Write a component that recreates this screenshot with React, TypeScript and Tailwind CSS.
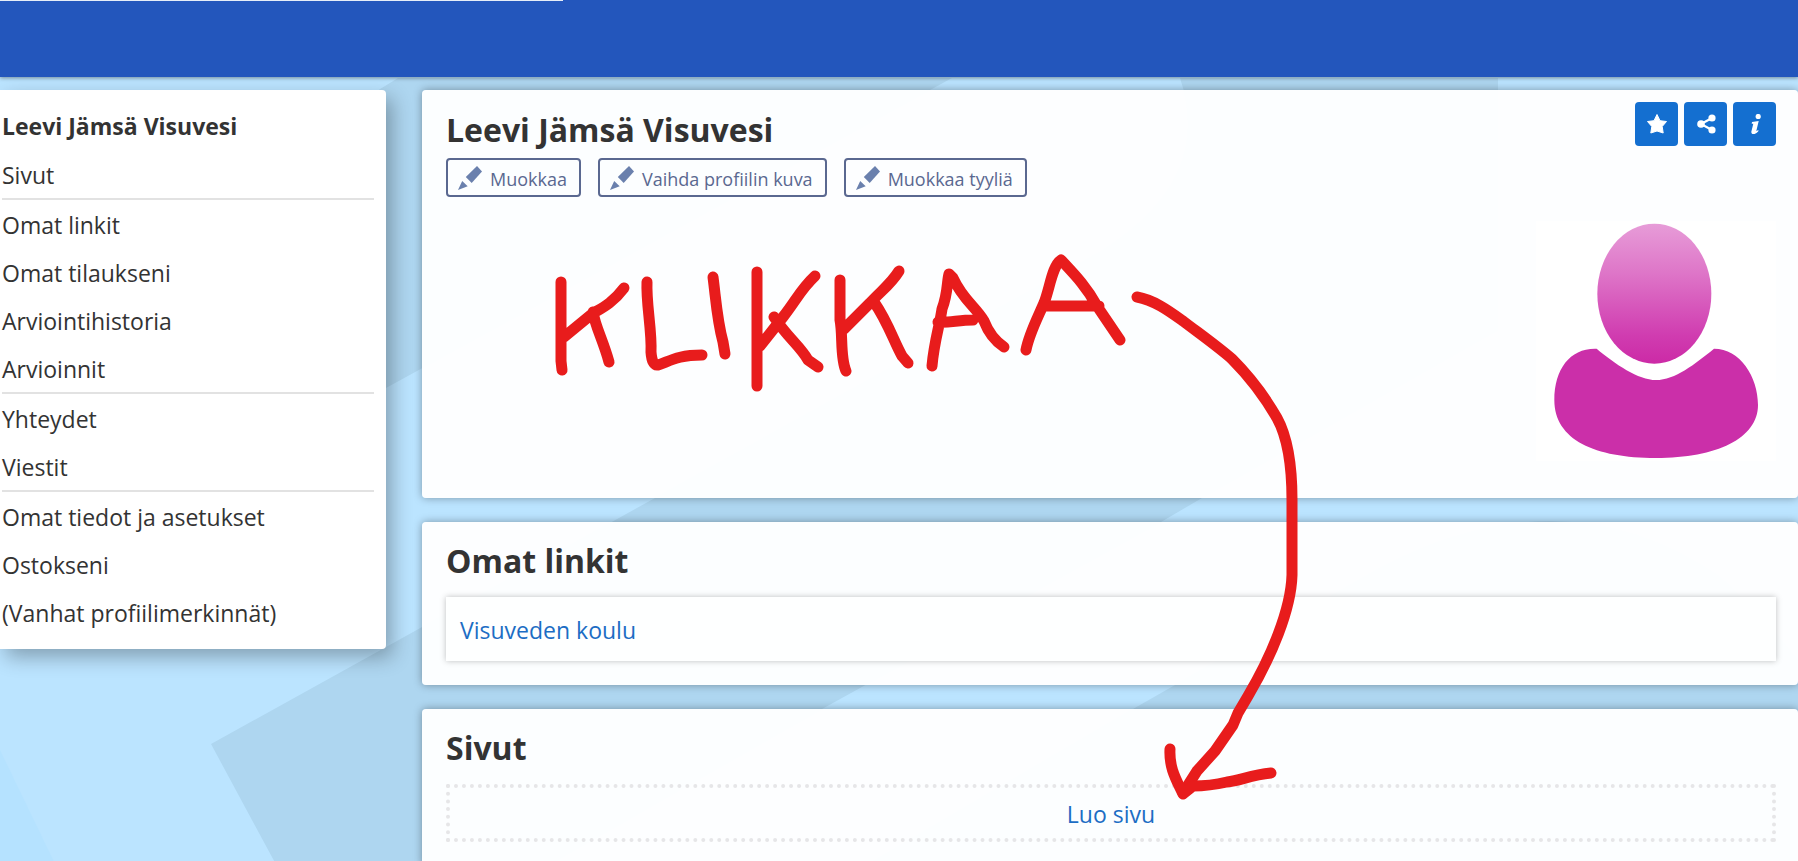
import type { ReactNode } from 'react';

const menuGroups = [
  ['Sivut'],
  ['Omat linkit', 'Omat tilaukseni', 'Arviointihistoria', 'Arvioinnit'],
  ['Yhteydet', 'Viestit'],
  ['Omat tiedot ja asetukset', 'Ostokseni', '(Vanhat profiilimerkinnät)'],
];

const editActions = ['Muokkaa', 'Vaihda profiilin kuva', 'Muokkaa tyyliä'];

function Backdrop() {
  return (
    <svg className="absolute inset-0 -z-10 h-full w-full bg-[#bbe4ff]" aria-hidden="true">
      <path d="M0 750L58 870H0Z" fill="#b5e2ff" />
      <path d="M398 78L200 200L250 463L386 388L952 78Z" fill="#aed6f0" />
      <path d="M211 744L655 498L1100 252Q1215 180 1180 78H1498V330L1202 498L1161 522L822 709L540 870H279Z" fill="#aed6f0" />
      <path d="M858 870L1133 709L1380 568Q1565 470 1720 577Q1798 650 1840 720V870Z" fill="#aed6f0" />
    </svg>
  );
}

function PencilIcon() {
  return (
    <svg className="h-6 w-6" viewBox="0 0 24 24" fill="#6a80ad" aria-hidden="true">
      <path d="M19 0L24 5.600L13.700 17L7.800 11Z" />
      <path d="M4.200 15L9.700 20.300L0 24Z" />
    </svg>
  );
}

function StarIcon() {
  return (
    <svg className="h-5 w-5" viewBox="0 0 20 20" fill="#fff" aria-hidden="true">
      <path
        d="M10 0.500L13 6.700L19.500 7.500L15.200 12.500L16.200 19L10 17L3.800 19L4.800 12.500L0.500 7.500L7 6.700Z"
        stroke="#fff"
        strokeLinejoin="round"
      />
    </svg>
  );
}

function ShareIcon() {
  return (
    <svg className="h-5 w-5" viewBox="0 0 20 20" fill="#fff" aria-hidden="true">
      <path d="M16 4L5 10L16 16" fill="none" stroke="#fff" strokeWidth="2.200" />
      <circle cx="5" cy="10" r="3.800" />
      <circle cx="16" cy="4" r="3.600" />
      <circle cx="16" cy="16" r="3.600" />
    </svg>
  );
}

function InfoIcon() {
  return (
    <svg className="h-5 w-5" viewBox="0 0 20 20" fill="#fff" aria-hidden="true">
      <circle cx="13.200" cy="2.500" r="2.600" />
      <path d="M7 8L13.700 7L11.300 17L13.500 16L13.200 17.500Q11 20.200 8 20.200Q5.800 19.700 6.500 17L8.300 9.700L6.700 9.700Z" />
    </svg>
  );
}

function Avatar() {
  return (
    <svg className="h-60 w-60 bg-white" viewBox="108 483 720 720" role="img" aria-label="Profiilikuva">
      <defs>
        <linearGradient id="head" x1="0" y1="0" x2="0" y2="1">
          <stop offset="0" stopColor="#e79cd8" />
          <stop offset="0.350" stopColor="#de76c8" />
          <stop offset="0.800" stopColor="#d03cb0" />
          <stop offset="1" stopColor="#cc2aa6" />
        </linearGradient>
      </defs>
      <ellipse cx="463" cy="701" rx="171" ry="210" fill="url(#head)" />
      <path
        d="M290 866C345 912 415 960 468 960C525 960 585 912 642 866C720 866 774 950 774 1035C774 1135 650 1194 468 1194C285 1194 163 1140 163 1020C163 925 212 863 290 866Z"
        fill="#cb2fa9"
      />
    </svg>
  );
}

function Drawing() {
  return (
    <svg
      className="pointer-events-none absolute left-0 top-0 h-[861px] w-[1798px]"
      viewBox="0 0 1798 861"
      fill="none"
      stroke="#e81c1c"
      strokeWidth="11"
      strokeLinecap="round"
      strokeLinejoin="round"
      aria-hidden="true"
    >
      {/* K L I */}
      <path d="M561 282V361L562 370M624 288C612 304 600 309 592 314L564 337M593 312C595 326 603 340 609 362" />
      <path d="M647 282C646 304 652 330 651 352Q652 366 658 365C670 361 678 355 702 355" />
      <path d="M713 277C716 300 717 320 723 342L725 354" />
      {/* K K */}
      <path d="M757 272V386M815 276C801 289 797 299 783 317L760 346M774 317C788 338 800 346 808 360L818 367" />
      <path d="M840 280V320C843 335 840 358 846 371M899 271C891 284 882 290 870 303L844 329M874 302C888 322 894 342 902 356L908 363" />
      {/* A A */}
      <path d="M932 366C934 342 940 324 942 309C948 294 947 280 949 274L953 278C963 300 976 307 984 321C989 334 995 341 1004 347M938 322C948 323 959 320 973 320" />
      <path d="M1026 350C1029 334 1038 317 1044 303C1050 288 1052 266 1061 260C1074 274 1086 286 1097 306L1120 340M1046 306H1099" />
      {/* arrow */}
      <path d="M1137 297C1154 300 1169 311 1183 321C1200 334 1217 346 1232 359C1250 377 1265 397 1277 418C1288 438 1292 470 1292 500V575C1291 610 1271 657 1248 696L1238 713L1233 725L1215 751L1197 771L1183 793" />
      <path d="M1170 749C1169 768 1176 779 1183 794L1193 786C1207 786 1214 785 1227 782C1240 781 1250 775 1271 773" />
    </svg>
  );
}

function Panel({ title, children }: { title: string; children: ReactNode }) {
  return (
    <section className="rounded-sm bg-white/96 pt-[15px] pr-[22px] pb-6 pl-6 shadow-[0_0_8px_rgba(0,0,0,0.35)]">
      <h2 className="text-[32px] leading-12 font-bold">{title}</h2>
      <div className="pt-3">{children}</div>
    </section>
  );
}

export default function App() {
  return (
    <div className="relative isolate min-h-screen overflow-hidden font-['Open_Sans','Noto_Sans',sans-serif] text-[#333]">
      <Backdrop />
      <header className="h-[77px] bg-[#2356bc] shadow-[0_1px_4px_rgba(0,0,0,0.4)]">
        <div className="h-px w-[563px] bg-[#e6edf8]" />
      </header>

      <div className="flex items-start gap-9 pt-[13px]">
        <nav className="w-[386px] shrink-0 rounded-r-sm bg-white pt-3 pr-3 pb-[13px] pl-0.5 shadow-[6px_8px_20px_rgba(0,0,0,0.3)]">
          <h2 className="text-[23px] leading-12 font-bold">Leevi Jämsä Visuvesi</h2>
          {menuGroups.map((group, index) => (
            <ul key={group[0]} className={index > 0 ? 'border-t-2 border-[#e2e2e2]' : ''}>
              {group.map((item) => (
                <li key={item}>
                  <a href="#" className="block pt-0.5 text-[23px] leading-[46px]">{item}</a>
                </li>
              ))}
            </ul>
          ))}
        </nav>

        <main className="flex min-w-0 flex-1 flex-col gap-6">
          <section className="rounded-sm bg-white/96 pt-3 pr-[22px] pb-[37px] pl-6 shadow-[0_0_8px_rgba(0,0,0,0.35)]">
            <div className="flex justify-between">
              <div>
                <h1 className="pt-1 text-[32px] leading-12 font-bold">Leevi Jämsä Visuvesi</h1>
                <div className="flex gap-[17px] pt-1">
                  {editActions.map((action) => (
                    <button
                      key={action}
                      type="button"
                      className="flex h-[39px] items-center gap-2 rounded-sm border-2 border-[#5a6890] pr-3 pl-2.5 text-lg text-[#5a6890]"
                    >
                      <PencilIcon />
                      <span className="pt-0.5">{action}</span>
                    </button>
                  ))}
                </div>
              </div>
              <div className="flex gap-1.5">
                <button type="button" aria-label="Suosikki" className="flex h-11 w-[43px] items-center justify-center rounded-sm bg-[#146fd0]">
                  <StarIcon />
                </button>
                <button type="button" aria-label="Jaa" className="flex h-11 w-[43px] items-center justify-center rounded-sm bg-[#146fd0]">
                  <ShareIcon />
                </button>
                <button type="button" aria-label="Tietoja" className="flex h-11 w-[43px] items-center justify-center rounded-sm bg-[#146fd0]">
                  <InfoIcon />
                </button>
              </div>
            </div>
            <div className="flex justify-end pt-6">
              <Avatar />
            </div>
          </section>

          <Panel title="Omat linkit">
            <div className="bg-white/50 px-3.5 shadow-[0_0_6px_rgba(0,0,0,0.25)]">
              <a href="#" className="block pt-0.5 text-[23px] leading-[62px] text-[#1c6dc4]">Visuveden koulu</a>
            </div>
          </Panel>

          <Panel title="Sivut">
            <div className="border-4 border-dotted border-[#e6e6e8] text-center">
              <a href="#" className="block pt-0.5 text-[23px] leading-12 text-[#1c6dc4]">Luo sivu</a>
            </div>
          </Panel>
        </main>
      </div>

      <Drawing />
    </div>
  );
}
